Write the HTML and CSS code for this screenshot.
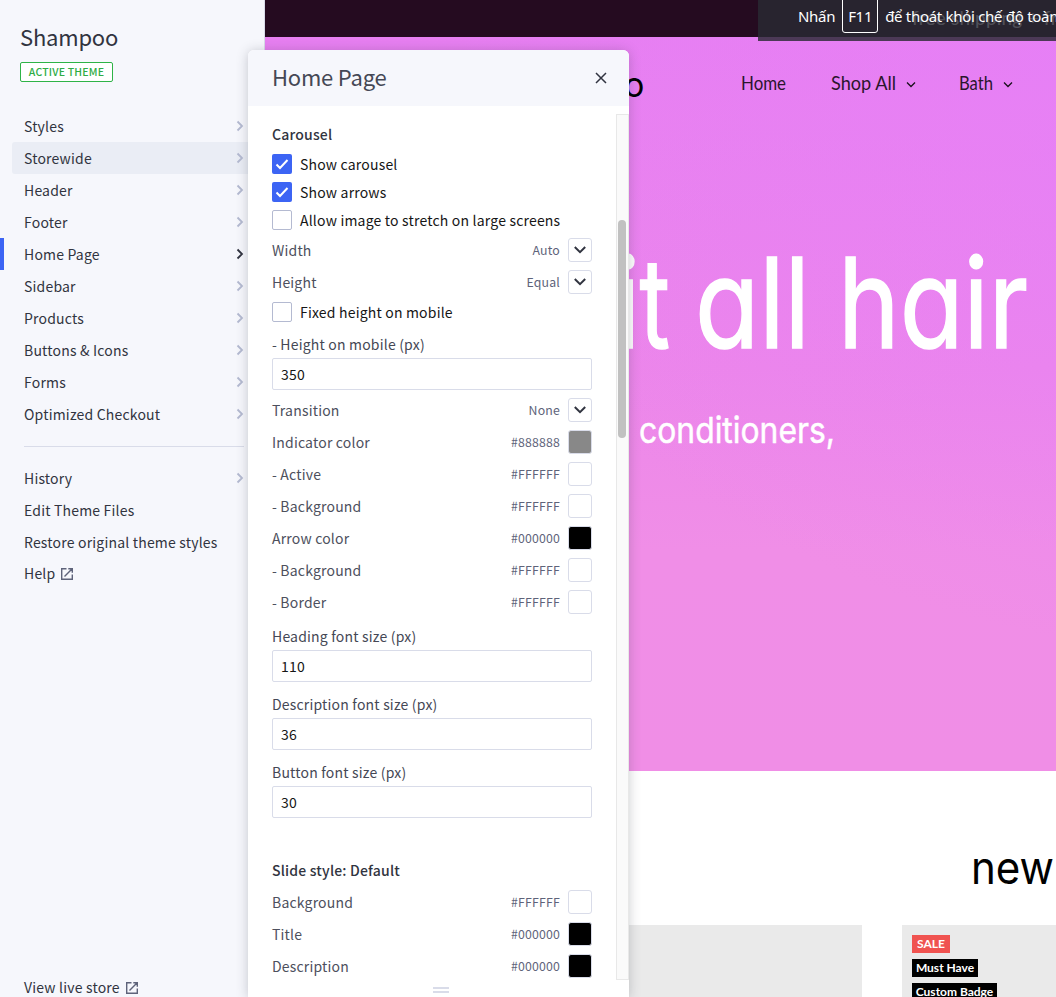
FILE: index.html
```html
<!DOCTYPE html>
<html lang="en">
<head>
<meta charset="utf-8">
<title>Theme editor</title>
<link rel="stylesheet" href="styles.css">
</head>
<body>
<svg class="defs" width="0" height="0">
  <symbol id="next" viewBox="0 0 8 12"><path d="M1.5 1.5 6 6 1.5 10.5" fill="none" stroke="currentColor" stroke-width="1.8"/></symbol>
  <symbol id="down" viewBox="0 0 14 10"><path d="M1.8 2 7 7.2 12.2 2" fill="none" stroke="currentColor" stroke-width="2"/></symbol>
  <symbol id="check" viewBox="0 0 20 20"><path d="M4.5 10.5 8 14 15.5 6" fill="none" stroke="#fff" stroke-width="2"/></symbol>
  <symbol id="out" viewBox="0 0 14 14"><path d="M6.5 1.7H1.7V12.3H12.3V7.5M8.3 1.7H12.3V5.7M12.2 1.8 4.5 9.5" fill="none" stroke="currentColor" stroke-width="1.4"/></symbol>
</svg>
<div class="app">
  <aside class="sidebar">
    <h1 class="theme-name">Shampoo</h1>
    <span class="tag">ACTIVE THEME</span>
    <nav class="menu">
      <a class="item">Styles<svg class="next"><use href="#next"/></svg></a>
      <a class="item hover">Storewide<svg class="next"><use href="#next"/></svg></a>
      <a class="item">Header<svg class="next"><use href="#next"/></svg></a>
      <a class="item">Footer<svg class="next"><use href="#next"/></svg></a>
      <a class="item active">Home Page<svg class="next"><use href="#next"/></svg></a>
      <a class="item">Sidebar<svg class="next"><use href="#next"/></svg></a>
      <a class="item">Products<svg class="next"><use href="#next"/></svg></a>
      <a class="item">Buttons &amp; Icons<svg class="next"><use href="#next"/></svg></a>
      <a class="item">Forms<svg class="next"><use href="#next"/></svg></a>
      <a class="item">Optimized Checkout<svg class="next"><use href="#next"/></svg></a>
    </nav>
    <nav class="menu secondary">
      <a class="item">History<svg class="next"><use href="#next"/></svg></a>
      <a class="item">Edit Theme Files</a>
      <a class="item">Restore original theme styles</a>
      <a class="item ext help">Help<svg class="out"><use href="#out"/></svg></a>
    </nav>
    <a class="item ext live">View live store<svg class="out"><use href="#out"/></svg></a>
  </aside>

  <main class="preview">
    <div class="promo"><span class="promo-text">free shipping + fr</span></div>
    <section class="hero">
      <svg class="hero-text" width="791" height="734">
        <text class="nav-text" x="476" y="53" textLength="45" lengthAdjust="spacingAndGlyphs">Home</text>
        <text class="nav-text" x="566" y="53" textLength="65" lengthAdjust="spacingAndGlyphs">Shop All</text>
        <path class="caret" d="M642 45.5 646 49.5 650 45.5"/>
        <text class="nav-text" x="694" y="53" textLength="34" lengthAdjust="spacingAndGlyphs">Bath</text>
        <path class="caret" d="M739 45.5 743 49.5 747 45.5"/>
        <text class="logo" x="359" y="60">o</text>
        <text class="title" x="352" y="311" textLength="53" lengthAdjust="spacingAndGlyphs">it</text>
        <text class="title" x="430" y="311" textLength="115" lengthAdjust="spacingAndGlyphs">all</text>
        <text class="title" x="573" y="311" textLength="190" lengthAdjust="spacingAndGlyphs">hair</text>
        <text class="lead" x="374" y="406" textLength="196" lengthAdjust="spacingAndGlyphs">conditioners,</text>
      </svg>
    </section>
    <section class="products">
      <svg class="new" width="85" height="60"><text x="0" y="46" textLength="83" lengthAdjust="spacingAndGlyphs">new</text></svg>
      <div class="cards">
        <div class="card"></div>
        <div class="card">
          <span class="badge sale">SALE</span>
          <span class="badge must">Must Have</span>
          <span class="badge custom">Custom Badge</span>
        </div>
      </div>
    </section>
  </main>

  <div class="toast"><span>Nhấn</span><kbd class="key">F11</kbd><span class="rest">để thoát khỏi chế độ toàn</span></div>

  <section class="panel">
    <header class="panel-head"><h2 class="panel-title">Home Page</h2>
      <svg class="close" viewBox="0 0 12 12"><path d="M1 1 11 11M11 1 1 11"/></svg></header>
    <div class="panel-body">
      <form class="fields">
        <h3 class="group first">Carousel</h3>
        <label class="tick"><span class="box on"><svg><use href="#check"/></svg></span>Show carousel</label>
        <label class="tick"><span class="box on"><svg><use href="#check"/></svg></span>Show arrows</label>
        <label class="tick"><span class="box"></span>Allow image to stretch on large screens</label>
        <div class="row"><span>Width</span><span class="val">Auto</span><span class="sw"><svg><use href="#down"/></svg></span></div>
        <div class="row"><span>Height</span><span class="val">Equal</span><span class="sw"><svg><use href="#down"/></svg></span></div>
        <label class="tick"><span class="box"></span>Fixed height on mobile</label>
        <label class="label">- Height on mobile (px)</label>
        <div class="input">350</div>
        <div class="row gap"><span>Transition</span><span class="val">None</span><span class="sw"><svg><use href="#down"/></svg></span></div>
        <div class="row"><span>Indicator color</span><span class="val">#888888</span><span class="sw gray"></span></div>
        <div class="row"><span>- Active</span><span class="val">#FFFFFF</span><span class="sw"></span></div>
        <div class="row"><span>- Background</span><span class="val">#FFFFFF</span><span class="sw"></span></div>
        <div class="row"><span>Arrow color</span><span class="val">#000000</span><span class="sw black"></span></div>
        <div class="row"><span>- Background</span><span class="val">#FFFFFF</span><span class="sw"></span></div>
        <div class="row"><span>- Border</span><span class="val">#FFFFFF</span><span class="sw"></span></div>
        <label class="label">Heading font size (px)</label>
        <div class="input">110</div>
        <label class="label wide">Description font size (px)</label>
        <div class="input">36</div>
        <label class="label wide">Button font size (px)</label>
        <div class="input">30</div>
        <h3 class="group">Slide style: Default</h3>
        <div class="row"><span>Background</span><span class="val">#FFFFFF</span><span class="sw"></span></div>
        <div class="row"><span>Title</span><span class="val">#000000</span><span class="sw black"></span></div>
        <div class="row"><span>Description</span><span class="val">#000000</span><span class="sw black"></span></div>
      </form>
      <div class="track"><div class="thumb"></div></div>
    </div>
    <div class="grip"></div>
  </section>
</div>
</body>
</html>
```
FILE: styles.css
```css
* { box-sizing: border-box; }
body { margin: 0; font: 14px/20px "Noto Sans CJK SC", "Noto Sans", sans-serif; letter-spacing: .19px; color: #313440; }
h1, h2, h3 { margin: 0; font-weight: 400; }
.defs { display: none; }
.app { position: relative; display: flex; width: 1056px; height: 997px; overflow: hidden; }

/* Sidebar */
.sidebar { width: 265px; flex: none; background: #f6f7fc; border-right: 1px solid #d9dce9; display: flex; flex-direction: column; }
.theme-name { margin: 20px 0 0 20px; font-size: 22px; line-height: 32px; letter-spacing: -.2px; }
.tag { align-self: flex-start; margin: 10px 0 28px 20px; width: 93px; height: 20px; border: 1px solid #2eb347; border-radius: 2px; background: #fff; color: #2eac45; font-size: 10.5px; font-weight: 500; line-height: 18px; text-align: center; }
.item { display: flex; align-items: center; height: 32px; margin-left: 12px; padding: 0 20px 1px 12px; border-radius: 3px 0 0 3px; }
.hover { background: #eaedf5; }
.active { margin-left: 0; padding-left: 20px; border-left: 4px solid #3c64f4; border-radius: 0; }
.next { width: 8px; height: 12px; margin: 1px 0 0 auto; color: #b4bad1; }
.active .next { color: #313440; }
.secondary { margin-top: 16px; padding-top: 16px; position: relative; }
.secondary::before { content: ""; position: absolute; left: 24px; right: 20px; top: 0; height: 1px; background: #d9dce9; }
.out { width: 14px; height: 14px; margin: 1px 0 0 5px; color: #5e637a; }
.help { height: 31px; }
.live { margin-top: auto; margin-bottom: -7px; flex: none; padding-bottom: 2px; }

/* Store preview */
.preview { flex: 1; background: #fff; font-family: Inter, sans-serif; letter-spacing: 0; }
.promo { height: 37px; padding: 8px 0 0 647px; background: #250b20; overflow: hidden; white-space: nowrap; }
.promo-text { font: 19px/20px Lato, sans-serif; letter-spacing: .2px; color: #fff; }
.hero { height: 734px; background: radial-gradient(ellipse at 85% 5%, rgba(230,128,249,.8), transparent 60%), linear-gradient(180deg, #e77ff1 0%, #ec86ea 45%, #f08ee7 70%, #f08ee6 100%); }
.hero-text { display: block; fill: #fff; font-family: Inter, sans-serif; font-feature-settings: "cv11"; }
.nav-text { font-size: 19px; font-weight: 400; fill: #2b152d; font-family: Lato, sans-serif; }
.caret { fill: none; stroke: #18101a; stroke-width: 1.3; }
.logo { font-size: 34px; fill: #000; }
.title { font-size: 125px; stroke: #fff; stroke-width: 1.5px; }
.lead { font-size: 36px; stroke: #fff; stroke-width: .5px; }
.products { padding-top: 67px; }
.new { display: block; margin-left: 706px; height: 60px; }
.new text { font: 45px Inter, sans-serif; fill: #000; }
.cards { display: flex; gap: 40px; margin-top: 27px; }
.card { width: 597px; height: 72px; padding: 10px; background: #eaeaea; display: flex; flex: none; flex-direction: column; align-items: flex-start; gap: 6px; overflow: hidden; }
.badge { height: 18px; flex: none; background: #000; color: #fff; font: 700 12px/18px Lato, sans-serif; text-align: center; white-space: nowrap; }
.sale { width: 38px; background: #f05350; }
.must { width: 66px; }
.custom { width: 85px; }

/* Full-screen notice */
.toast { position: absolute; left: 758px; top: 0; width: 298px; height: 41px; padding-left: 40px; background: rgba(41,42,51,.82); color: #fff; display: flex; font: 15px/20px "Noto Sans", sans-serif; letter-spacing: -.3px; white-space: nowrap; overflow: hidden; }
.toast span { flex: none; margin-top: 6px; }
.key { flex: none; width: 36px; height: 36px; margin: -3px 7px 0; border: 1px solid #fff; border-radius: 3px; font: inherit; line-height: 36px; text-align: center; }

/* Settings panel */
.panel { position: absolute; left: 248px; top: 50px; width: 381px; height: 947px; background: #fff; border-radius: 6px 6px 0 0; box-shadow: 0 1px 12px rgba(49,52,64,.25); overflow: hidden; clip-path: inset(-20px -20px 0 -20px); }
.panel-head { height: 56px; padding: 0 22px 0 24px; background: #f6f7fc; display: flex; align-items: center; justify-content: space-between; }
.panel-title { margin-top: -4px; font-size: 22px; letter-spacing: -.2px; color: #454855; }
.close { width: 12px; height: 12px; fill: none; stroke: #313440; stroke-width: 1.5; }
.panel-body { display: flex; height: 874px; justify-content: space-between; }
.fields { width: 344px; padding: 13px 0 0 24px; }
.fields > * { width: 320px; }
.group { height: 32px; margin-top: 36px; line-height: 32px; font-size: 14px; font-weight: 500; }
.first { height: 31px; margin-top: 0; line-height: 30px; }
.tick { display: flex; align-items: center; gap: 8px; height: 28px; color: #161616; white-space: nowrap; }
.box { width: 20px; height: 20px; border: 1px solid #b4bad1; border-radius: 2px; }
.on { background: #3c64f4; border: 0; }
.box svg { display: block; width: 20px; height: 20px; }
.row { display: flex; align-items: center; height: 32px; color: #4d505d; }
.gap { margin-top: 4px; }
.val { margin: 0 8px 0 auto; font-size: 12.3px; color: #5e637a; }
.sw { display: flex; align-items: center; justify-content: center; width: 24px; height: 24px; border: 1px solid #d9dce9; border-radius: 3px; background: #fff; color: #313440; }
.sw svg { width: 14px; height: 10px; }
.gray { background: #888; }
.black { background: #000; }
.label { display: block; height: 26px; margin-top: 6px; line-height: 24px; color: #454855; }
.wide { margin-top: 10px; }
.input { height: 32px; padding-left: 8px; border: 1px solid #d9dce9; border-radius: 2px; line-height: 30px; color: #161616; }
.track { width: 13px; margin-top: 8px; padding: 105px 2px 0 1px; border: 1px solid #e8e8e8; background: #fafafa; }
.thumb { width: 8px; height: 218px; border-radius: 4px; background: #c1c1c1; }
.grip { width: 16px; height: 6px; margin: 7px 0 0 185px; border: solid #d9dce9; border-width: 2px 0; }
```
